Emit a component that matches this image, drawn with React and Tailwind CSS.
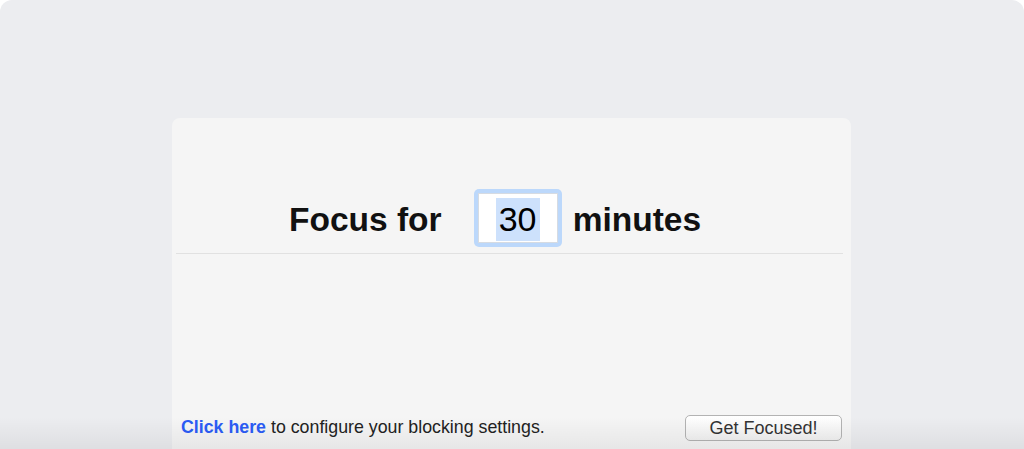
import React from 'react';

const App = () => {
  return (
    <main className="relative h-[449px] w-[1024px] overflow-hidden bg-white font-['Liberation_Sans',Arial,sans-serif]">
      {/* Window frame */}
      <div className="flex h-full flex-col rounded-t-[12px] bg-[#ecedf0] pt-[118px]">
        {/* Focus panel */}
        <section className="ml-[172px] flex w-[679px] flex-1 flex-col rounded-t-[8px] bg-[#f5f5f5]">
          <div className="flex items-center pl-[117px] pt-[71px] text-[#111]">
            <span className="pt-[4px] text-[33.5px] font-bold leading-none">Focus for</span>

            {/* Minutes field, focused with the value selected */}
            <div className="ml-[32px] flex h-[58px] w-[88px] items-center justify-center rounded-[5px] bg-[#bcd8fb] p-[4px]">
              <div className="flex h-full w-full items-center justify-center border border-[#d6dbe2] bg-white pt-[3px]">
                <span className="bg-[#cde1fc] px-[3px] text-[34px] font-normal leading-[43px] text-black">30</span>
              </div>
            </div>

            <span className="ml-[11px] pt-[4px] text-[33.5px] font-bold leading-none">minutes</span>
          </div>

          <div className="ml-[4px] mr-[8px] mt-[6px] h-px bg-[#e1e1e1]" />

          <div className="flex-1" />

          {/* Footer */}
          <div className="flex items-center justify-between pb-[8px] pl-[9px] pr-[9px]">
            <p className="text-[17.8px] leading-none text-[#222]">
              <span className="font-bold text-[#2b5cf6]">Click here</span> to configure your blocking settings.
            </p>
            <button
              type="button"
              className="flex h-[26px] w-[157px] items-center justify-center rounded-[5px] border border-[#b3b3b3] bg-linear-to-b from-white to-[#f1f1f1] text-[18px] leading-none text-[#333]"
            >
              Get Focused!
            </button>
          </div>
        </section>
      </div>

      {/* Soft shade along the bottom edge */}
      <div className="pointer-events-none absolute inset-x-0 bottom-0 h-[32px] bg-linear-to-b from-transparent to-black/[0.06]" />
    </main>
  );
};

export default App;
